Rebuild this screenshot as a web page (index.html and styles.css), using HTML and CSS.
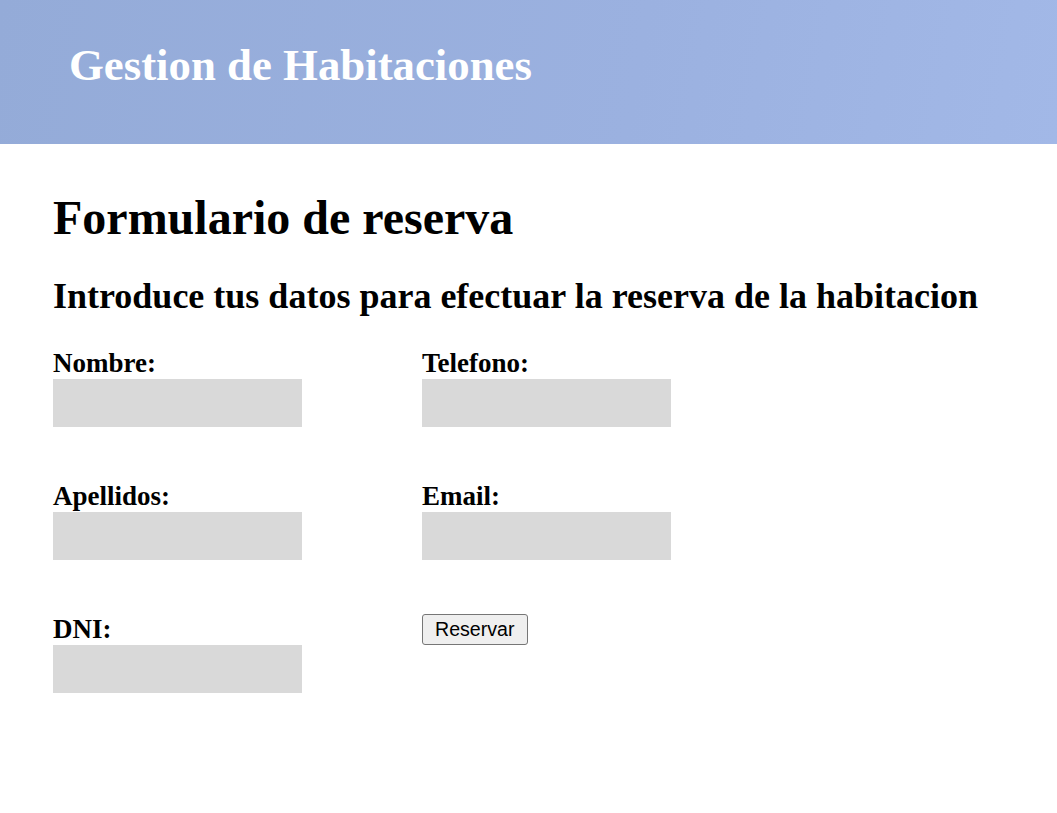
FILE: index.html
```html
<!DOCTYPE html>
<html lang="es">
<head>
<meta charset="utf-8">
<title>Gestion de Habitaciones</title>
<link rel="stylesheet" href="styles.css">
</head>
<body>
<header class="site-header">
  <div class="site-title">Gestion de Habitaciones</div>
</header>
<main class="content">
  <h1 class="page-title">Formulario de reserva</h1>
  <h2 class="page-subtitle">Introduce tus datos para efectuar la reserva de la habitacion</h2>
  <form class="booking-form">
    <div class="field">
      <label class="field-label" for="nombre">Nombre:</label>
      <input class="field-input" id="nombre" type="text">
    </div>
    <div class="field">
      <label class="field-label" for="telefono">Telefono:</label>
      <input class="field-input" id="telefono" type="text">
    </div>
    <div class="field">
      <label class="field-label" for="apellidos">Apellidos:</label>
      <input class="field-input" id="apellidos" type="text">
    </div>
    <div class="field">
      <label class="field-label" for="email">Email:</label>
      <input class="field-input" id="email" type="text">
    </div>
    <div class="field">
      <label class="field-label" for="dni">DNI:</label>
      <input class="field-input" id="dni" type="text">
    </div>
    <div class="field">
      <button class="submit-btn" type="submit">Reservar</button>
    </div>
  </form>
</main>
</body>
</html>
```
FILE: styles.css
```css
html, body {
  margin: 0;
  padding: 0;
  background: #ffffff;
  font-family: "Liberation Serif", "Times New Roman", serif;
  color: #000000;
}

.site-header {
  height: 144px;
  box-sizing: border-box;
  padding: 39px 0 0 69px;
  background: linear-gradient(100deg, #94abd8 0%, #9bb1e0 60%, #a2b8e7 100%);
}

.site-title {
  font-size: 44.8px;
  line-height: 52px;
  font-weight: bold;
  color: #ffffff;
}

.content {
  padding: 46px 53px 40px 53px;
}

.page-title {
  margin: 0;
  font-size: 48px;
  line-height: 55px;
  font-weight: bold;
}

.page-subtitle {
  margin: 31px 0 0 0;
  font-size: 36px;
  line-height: 41px;
  font-weight: bold;
}

.booking-form {
  margin-top: 31px;
  display: grid;
  grid-template-columns: 249px 249px;
  column-gap: 120px;
  row-gap: 54px;
  align-items: start;
}

.field {
  display: flex;
  flex-direction: column;
  align-items: flex-start;
}

.field-label {
  display: block;
  font-size: 27px;
  line-height: 31px;
  font-weight: bold;
}

.field-input {
  width: 249px;
  height: 48px;
  box-sizing: border-box;
  margin: 0;
  border: none;
  padding: 0 8px;
  background: #d9d9d9;
  font-size: 16px;
}

.submit-btn {
  margin: 0;
  font-family: "Liberation Sans", Arial, sans-serif;
  font-size: 19.6px;
  line-height: 23px;
  padding: 3px 12px;
  height: 31px;
  box-sizing: border-box;
  background: #efefef;
  border: 1px solid #767676;
  border-radius: 3px;
  color: #000000;
}
```
